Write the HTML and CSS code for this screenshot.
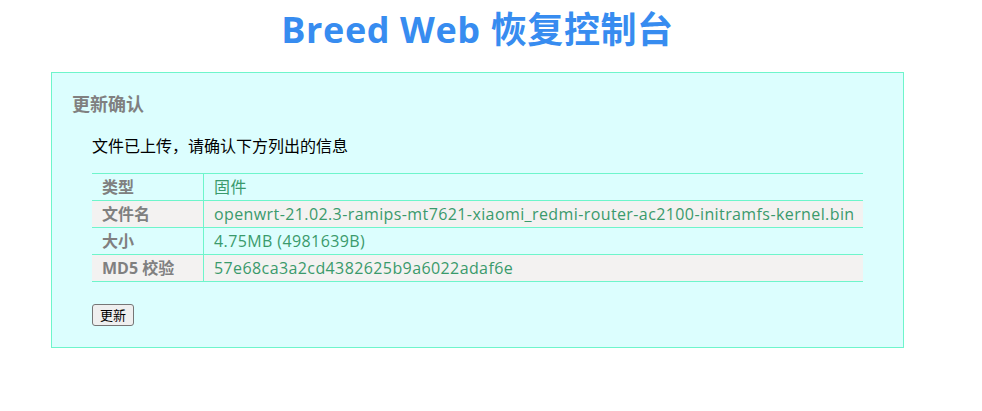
FILE: index.html
```html
<!DOCTYPE html>
<html lang="zh-CN">
<head>
<meta charset="utf-8">
<title>Breed Web 恢复控制台</title>
<link rel="stylesheet" href="styles.css">
</head>
<body>
<div class="wrap">
  <h1 class="title">Breed Web 恢复控制台</h1>
  <div class="panel">
    <h2 class="panel-title">更新确认</h2>
    <div class="panel-body">
      <p class="note">文件已上传，请确认下方列出的信息</p>
      <table class="info">
        <tr><th>类型</th><td>固件</td></tr>
        <tr class="alt"><th>文件名</th><td>openwrt-21.02.3-ramips-mt7621-xiaomi_redmi-router-ac2100-initramfs-kernel.bin</td></tr>
        <tr><th>大小</th><td>4.75MB (4981639B)</td></tr>
        <tr class="alt"><th>MD5 校验</th><td>57e68ca3a2cd4382625b9a6022adaf6e</td></tr>
      </table>
      <button class="btn" type="button">更新</button>
    </div>
  </div>
</div>
</body>
</html>
```
FILE: styles.css
```css
html, body {
  margin: 0;
  padding: 0;
  background: #ffffff;
}
body {
  font-family: "Open Sans", "Noto Sans CJK SC", sans-serif;
  color: #000;
}
.wrap {
  width: 853px;
  margin-left: 51px;
}
.title {
  margin: 0 0 12px 0;
  height: 60px;
  line-height: 60px;
  text-align: center;
  font-size: 36px;
  font-weight: 700;
  color: #378cf0;
  letter-spacing: 0.6px;
}
.panel {
  box-sizing: border-box;
  width: 853px;
  border: 1px solid #6ef5cb;
  background: #dcfefe;
  padding: 19px 40px 21px 20px;
}
.panel-title {
  margin: 0 0 20px 0;
  font-size: 18px;
  line-height: 24px;
  font-weight: 700;
  color: #808080;
}
.panel-body {
  padding-left: 20px;
}
.note {
  margin: 0 0 17px 0;
  font-size: 16px;
  line-height: 20px;
}
.info {
  width: 100%;
  table-layout: fixed;
  border-collapse: collapse;
  font-size: 16px;
  line-height: 18px;
}
.info tr {
  border-top: 1px solid #6ef5cb;
  border-bottom: 1px solid #6ef5cb;
}
.info tr.alt {
  background: #f3f2f1;
}
.info th {
  width: 91px;
  text-align: left;
  font-weight: 700;
  color: #808080;
  padding: 4px 10px;
  border-right: 1px solid #6ef5cb;
  white-space: nowrap;
}
.info td {
  color: #3a9a6c;
  padding: 4px 0 4px 10px;
  letter-spacing: 0.4px;
  white-space: nowrap;
}
.btn {
  margin-top: 22px;
  height: 22px;
  padding: 0 7px;
  font-family: "Noto Sans CJK SC", sans-serif;
  font-size: 13px;
  line-height: 18px;
  background: #efefef;
  border: 1px solid #767676;
  border-radius: 3px;
  color: #000;
}
```
